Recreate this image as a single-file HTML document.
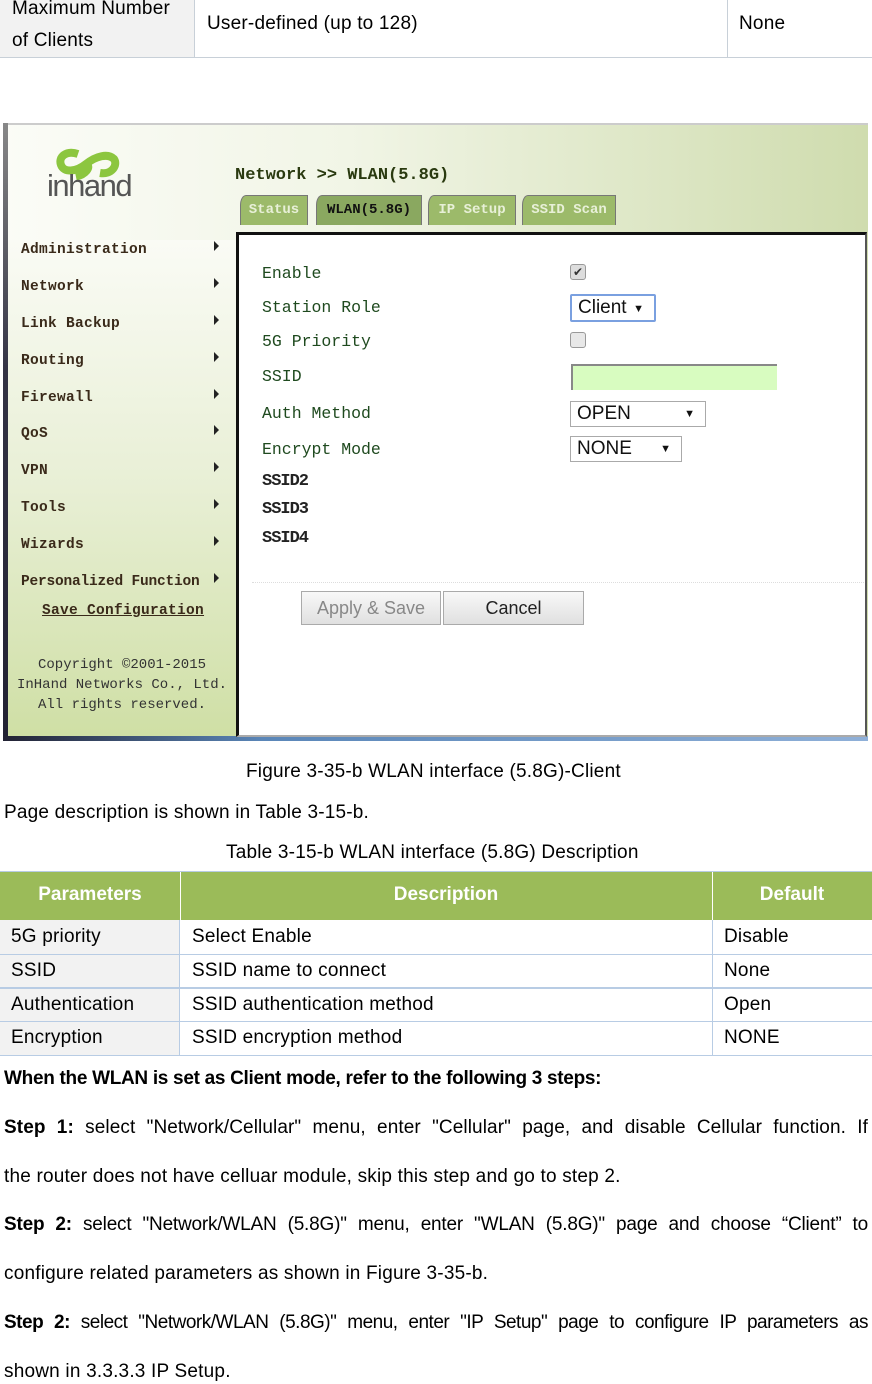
<!DOCTYPE html>
<html><head><meta charset="utf-8"><style>
*{margin:0;padding:0;box-sizing:border-box}
body{width:872px;height:1384px;position:relative;background:#fff;font-family:"Liberation Sans",sans-serif;color:#000;overflow:hidden}
.a{position:absolute;white-space:nowrap}
.t{font-size:19px;letter-spacing:0.2px}
.j{position:absolute;left:4px;width:864px;font-size:19px;letter-spacing:0.1px;text-align:justify;text-align-last:justify;white-space:nowrap}
.m{font-family:"Liberation Mono",monospace;font-weight:bold;color:#3a2a1a;font-size:14.5px;letter-spacing:0.3px}
.f{font-family:"Liberation Mono",monospace;color:#1f4a1f;font-size:16.5px}
.arr{position:absolute;left:214px;width:0;height:0;border-left:5px solid #222;border-top:5px solid transparent;border-bottom:5px solid transparent}
.tab{position:absolute;top:195px;height:30px;background:#9cba6a;border:1px solid #777;border-bottom:none;font-family:"Liberation Mono",monospace;font-weight:bold;color:#e8f0d8;font-size:14px;line-height:28px;text-align:center;border-top-left-radius:6px 10px}
.sel{position:absolute;background:#fff;border:1px solid #aaa;font-size:19px;line-height:24px;padding-left:6px;color:#111}
.sel span{position:absolute;right:10px;font-size:11px;top:0}
.row{position:absolute;left:0;width:872px;border-bottom:1px solid #b8cce4}
.c1{position:absolute;left:0;width:180px;height:100%;background:#f2f2f2;border-right:1px solid #b8cce4}
.vl{position:absolute;left:712px;top:0;height:100%;border-left:1px solid #b8cce4}
.h{position:absolute;top:884px;text-align:center;color:#fff;font-weight:bold;font-size:19px}
</style></head><body>
<div style="position:absolute;left:0;top:0;width:872px;height:58px;border-bottom:1px solid #c8d0d8">
<div style="position:absolute;left:0;top:0;width:195px;height:57px;background:#f2f2f2;border-right:1px solid #c8d0d8"></div>
<div style="position:absolute;left:727px;top:0;height:57px;border-left:1px solid #c8d0d8"></div>
</div>
<div class="a t" style="left:12px;top:-2px">Maximum Number</div>
<div class="a t" style="left:12px;top:30px">of Clients</div>
<div class="a t" style="left:207px;top:13px">User-defined (up to 128)</div>
<div class="a t" style="left:739px;top:13px">None</div>

<div style="position:absolute;left:3px;top:123px;width:865px;height:618px;background:linear-gradient(90deg,#fbfcf7 0%,#f1f5e6 40%,#cfdcae 100%);border-top:2px solid #ccc"></div>
<div style="position:absolute;left:3px;top:123px;width:5px;height:618px;background:linear-gradient(#888,#334 40%,#223)"></div>
<div style="position:absolute;left:8px;top:240px;width:228px;height:496px;background:linear-gradient(#fafbf5,#e8efd5 50%,#cfdfa5)"></div>
<div style="position:absolute;left:3px;top:736px;width:865px;height:5px;background:linear-gradient(90deg,#223,#5a86b8 30%,#8fb0d8)"></div>
<svg class="a" style="left:54px;top:147px" width="66" height="34" viewBox="0 0 66 34"><path d="M24 7 C12 3 4 10 7 18 C10 26 22 25 32 17 C42 9 54 6 60 12 C64 18 58 28 46 26" fill="none" stroke="#8cc63f" stroke-width="8"/><path d="M22 30 C32 28 38 20 33 17" fill="none" stroke="#8cc63f" stroke-width="7"/></svg>
<div class="a" style="left:47px;top:168px;font-size:31px;color:#555;letter-spacing:-1.5px">inhand</div>
<div class="a" style="left:235px;top:166px;font-family:'Liberation Mono',monospace;font-weight:bold;font-size:17px;color:#2a3a10">Network &gt;&gt; WLAN(5.8G)</div>
<div class="tab" style="left:240px;width:68px">Status</div>
<div class="tab" style="left:316px;width:106px;color:#111;background:#8aa860">WLAN(5.8G)</div>
<div class="tab" style="left:428px;width:88px">IP Setup</div>
<div class="tab" style="left:522px;width:94px">SSID Scan</div>
<div class="a m" style="left:21px;top:242px">Administration</div><div class="arr" style="top:241px"></div>
<div class="a m" style="left:21px;top:279px">Network</div><div class="arr" style="top:278px"></div>
<div class="a m" style="left:21px;top:316px">Link Backup</div><div class="arr" style="top:315px"></div>
<div class="a m" style="left:21px;top:353px">Routing</div><div class="arr" style="top:352px"></div>
<div class="a m" style="left:21px;top:390px">Firewall</div><div class="arr" style="top:389px"></div>
<div class="a m" style="left:21px;top:426px">QoS</div><div class="arr" style="top:425px"></div>
<div class="a m" style="left:21px;top:463px">VPN</div><div class="arr" style="top:462px"></div>
<div class="a m" style="left:21px;top:500px">Tools</div><div class="arr" style="top:499px"></div>
<div class="a m" style="left:21px;top:574px;letter-spacing:-0.2px">Personalized Function</div><div class="arr" style="top:573px"></div>
<div class="a m" style="left:21px;top:537px">Wizards</div><div class="arr" style="top:536px"></div>
<div class="a m" style="left:42px;top:603px;text-decoration:underline">Save Configuration</div>
<div class="a" style="left:6px;width:232px;top:655px;text-align:center;font-family:'Liberation Mono',monospace;font-size:14px;color:#333;line-height:20px;white-space:normal">Copyright ©2001-2015<br>InHand Networks Co., Ltd.<br>All rights reserved.</div>
<div style="position:absolute;left:236px;top:232px;width:631px;height:505px;background:#fff;border-top:3px solid #111;border-left:3px solid #111;border-right:2px solid #555;border-bottom:2px solid #aaa"></div>
<div class="a f" style="left:262px;top:264px">Enable</div>
<div class="a f" style="left:262px;top:298px">Station Role</div>
<div class="a f" style="left:262px;top:332px">5G Priority</div>
<div class="a f" style="left:262px;top:367px">SSID</div>
<div class="a f" style="left:262px;top:404px">Auth Method</div>
<div class="a f" style="left:262px;top:440px">Encrypt Mode</div>
<div class="a f" style="left:262px;top:472px;font-weight:bold;color:#222;letter-spacing:-1px;font-size:17px">SSID2</div>
<div class="a f" style="left:262px;top:500px;font-weight:bold;color:#222;letter-spacing:-1px;font-size:17px">SSID3</div>
<div class="a f" style="left:262px;top:529px;font-weight:bold;color:#222;letter-spacing:-1px;font-size:17px">SSID4</div>
<div style="position:absolute;left:570px;top:264px;width:16px;height:16px;border:1px solid #999;border-radius:3px;background:#ddd;font-size:12px;line-height:14px;text-align:center;color:#333">✔</div>
<div class="sel" style="left:570px;top:294px;width:86px;height:28px;border:2px solid #7aa0e0;border-radius:2px">Client<span style="top:1px">▼</span></div>
<div style="position:absolute;left:570px;top:332px;width:16px;height:16px;border:1px solid #999;border-radius:3px;background:#e8e8e8"></div>
<div style="position:absolute;left:571px;top:364px;width:206px;height:26px;background:#d8fcc0;border-top:2px solid #888;border-left:2px solid #888"></div>
<div class="sel" style="left:570px;top:401px;width:136px;height:26px">OPEN<span>▼</span></div>
<div class="sel" style="left:570px;top:436px;width:112px;height:26px">NONE<span>▼</span></div>
<div style="position:absolute;left:252px;top:582px;width:612px;border-top:1px dotted #ddd"></div>
<div style="position:absolute;left:301px;top:591px;width:140px;height:34px;border:1px solid #aaa;background:linear-gradient(#f8f8f8,#e0e0e0);color:#888;font-size:18px;line-height:32px;text-align:center">Apply &amp; Save</div>
<div style="position:absolute;left:443px;top:591px;width:141px;height:34px;border:1px solid #aaa;background:linear-gradient(#f8f8f8,#e0e0e0);color:#222;font-size:18px;line-height:32px;text-align:center">Cancel</div>

<div class="a t" style="left:246px;top:761px">Figure 3-35-b WLAN interface (5.8G)-Client</div>
<div class="a t" style="left:4px;top:802px">Page description is shown in Table 3-15-b.</div>
<div class="a t" style="left:226px;top:842px">Table 3-15-b WLAN interface (5.8G) Description</div>
<div style="position:absolute;left:0;top:871px;width:872px;height:49px;background:#9bbb59;border-top:1px solid #b8cce4"></div>
<div style="position:absolute;left:180px;top:872px;height:48px;border-left:1px solid #fff"></div>
<div style="position:absolute;left:712px;top:872px;height:48px;border-left:1px solid #fff"></div>
<div class="h" style="left:0;width:180px">Parameters</div>
<div class="h" style="left:180px;width:532px">Description</div>
<div class="h" style="left:712px;width:160px">Default</div>
<div class="row" style="top:920px;height:35px"><div class="c1"></div><div class="vl"></div></div>
<div class="row" style="top:955px;height:34px;border-bottom:2px solid #b8cce4"><div class="c1"></div><div class="vl"></div></div>
<div class="row" style="top:989px;height:33px"><div class="c1"></div><div class="vl"></div></div>
<div class="row" style="top:1022px;height:34px"><div class="c1"></div><div class="vl"></div></div>
<div class="a t" style="left:11px;top:926px">5G priority</div><div class="a t" style="left:192px;top:926px">Select Enable</div><div class="a t" style="left:724px;top:926px">Disable</div>
<div class="a t" style="left:11px;top:960px">SSID</div><div class="a t" style="left:192px;top:960px">SSID name to connect</div><div class="a t" style="left:724px;top:960px">None</div>
<div class="a t" style="left:11px;top:994px">Authentication</div><div class="a t" style="left:192px;top:994px">SSID authentication method</div><div class="a t" style="left:724px;top:994px">Open</div>
<div class="a t" style="left:11px;top:1027px">Encryption</div><div class="a t" style="left:192px;top:1027px">SSID encryption method</div><div class="a t" style="left:724px;top:1027px">NONE</div>

<div class="a t" style="left:4px;top:1068px;font-weight:bold;letter-spacing:-0.3px">When the WLAN is set as Client mode, refer to the following 3 steps:</div>
<div class="j" style="top:1117px"><b>Step 1:</b> select "Network/Cellular" menu, enter "Cellular" page, and disable Cellular function. If</div>
<div class="a t" style="left:4px;top:1166px">the router does not have celluar module, skip this step and go to step 2.</div>
<div class="j" style="top:1214px;letter-spacing:-0.2px"><b>Step 2:</b> select "Network/WLAN (5.8G)" menu, enter "WLAN (5.8G)" page and choose “Client” to</div>
<div class="a t" style="left:4px;top:1263px">configure related parameters as shown in Figure 3-35-b.</div>
<div class="j" style="top:1312px;letter-spacing:-0.5px"><b>Step 2:</b> select "Network/WLAN (5.8G)" menu, enter "IP Setup" page to configure IP parameters as</div>
<div class="a t" style="left:4px;top:1361px">shown in 3.3.3.3 IP Setup.</div>
</body></html>
